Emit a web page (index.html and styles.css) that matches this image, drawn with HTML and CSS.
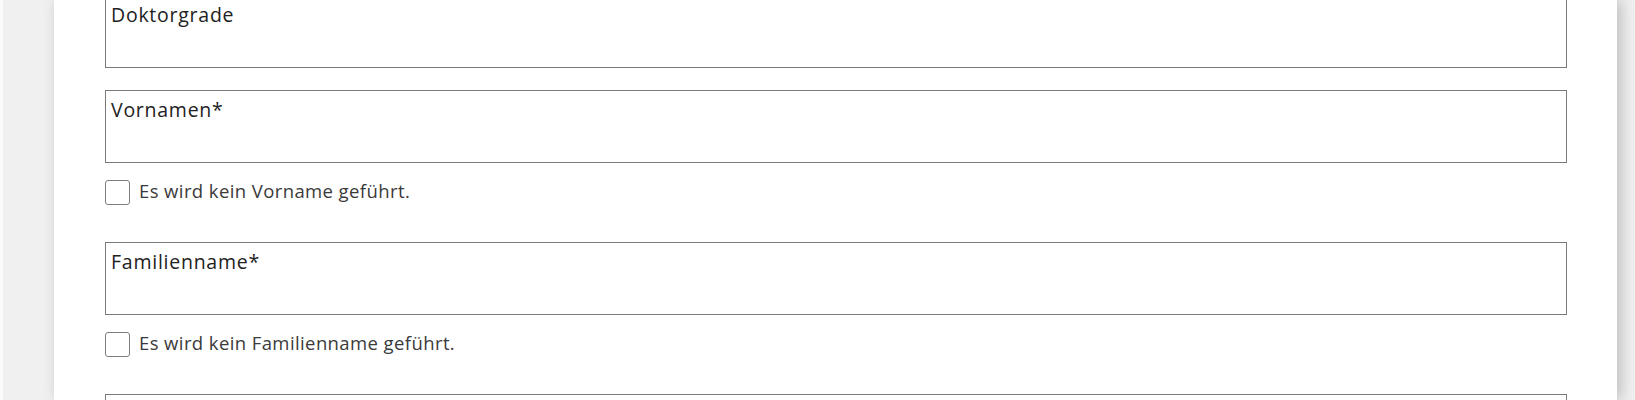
FILE: index.html
```html
<!DOCTYPE html>
<html lang="de">
<head>
<meta charset="utf-8">
<title>Formular</title>
<link rel="stylesheet" href="styles.css">
</head>
<body>
<div class="page">
  <main class="panel">
    <form class="form">
      <label class="field first">
        <span class="field-label">Doktorgrade</span>
        <input class="field-input" type="text">
      </label>
      <label class="field">
        <span class="field-label">Vornamen*</span>
        <input class="field-input" type="text">
      </label>
      <label class="check">
        <span class="check-box"></span>
        <span class="check-label">Es wird kein Vorname geführt.</span>
      </label>
      <label class="field">
        <span class="field-label">Familienname*</span>
        <input class="field-input" type="text">
      </label>
      <label class="check">
        <span class="check-box"></span>
        <span class="check-label">Es wird kein Familienname geführt.</span>
      </label>
      <div class="field"></div>
    </form>
  </main>
</div>
</body>
</html>
```

FILE: styles.css
```css
html, body {
  margin: 0;
  padding: 0;
  height: 400px;
  overflow: hidden;
}
body {
  background: #f0f0f0;
  font-family: "Open Sans", "Liberation Sans", sans-serif;
}
.page {
  display: flex;
  background: linear-gradient(to right, #fafafa 0, #fafafa 3px, #f0f0f0 3px);
  padding-left: 54px;
  padding-right: 18px;
  height: 400px;
}
.panel {
  flex: 1;
  background: #ffffff;
  box-shadow: 4px 0 14px rgba(0, 0, 0, 0.22);
  padding: 0 50px 0 51px;
  overflow: hidden;
}
.form {
  display: flex;
  flex-direction: column;
  margin-top: -5px;
}
.field {
  display: flex;
  flex-direction: column;
  height: 73px;
  box-sizing: border-box;
  border: 1px solid #7a7a7a;
  padding: 6px 5px 0 5px;
  margin-top: 37px;
}
.field.first {
  margin-top: 0;
}
.field + .field {
  margin-top: 22px;
}
.field-label {
  font-size: 19.5px;
  line-height: 26px;
  letter-spacing: 0.75px;
  color: #222222;
}
.field-input {
  border: 0;
  outline: 0;
  padding: 0;
  font: inherit;
  background: transparent;
}
.check {
  display: flex;
  align-items: center;
  gap: 9px;
  margin-top: 17px;
  height: 25px;
}
.check-box {
  width: 23px;
  height: 23px;
  border: 1px solid #7d7d7d;
  border-radius: 3px;
  box-sizing: content-box;
  flex: none;
}
.check-label {
  font-size: 18.5px;
  letter-spacing: 0.4px;
  color: #3a3a3a;
  padding-bottom: 4px;
}
```
